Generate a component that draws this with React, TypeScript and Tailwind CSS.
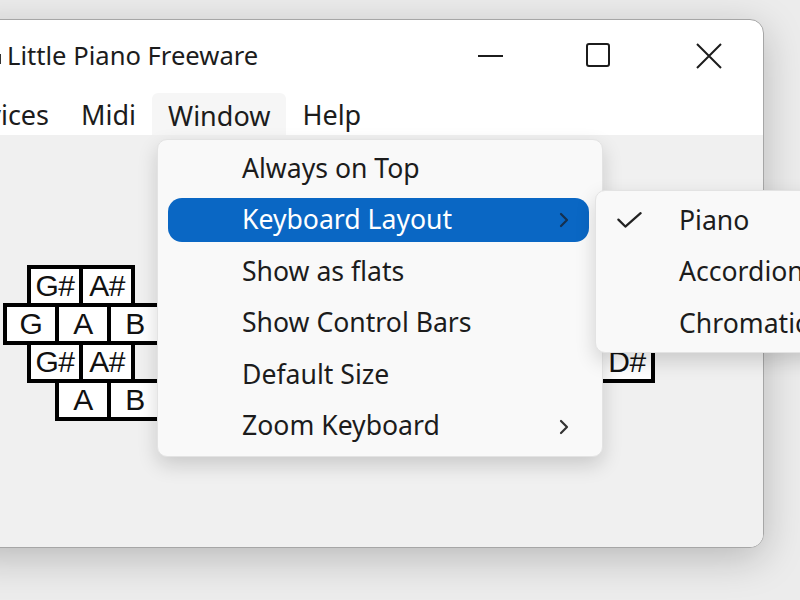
import React from "react";

const FONT = { fontFamily: '"Noto Sans", "Open Sans", sans-serif' };
const KEYFONT = { fontFamily: '"Liberation Sans", Arial, sans-serif' };

type K = string | null;

function KeyRow({ keys, ml, first }: { keys: K[]; ml: number; first?: boolean }) {
  return (
    <div className={`flex ${first ? "" : "-mt-[4px]"}`} style={{ marginLeft: ml }}>
      {keys.map((k, i) =>
        k === null ? (
          <div key={i} className="w-[56px] h-[42px] shrink-0 -ml-[4px] first:ml-0" />
        ) : (
          <div
            key={i}
            className="w-[56px] h-[42px] shrink-0 -ml-[4px] first:ml-0 border-[4px] border-black bg-white flex items-center justify-center text-[30px] leading-none text-[#111] tracking-[-0.5px]"
            style={KEYFONT}
          >
            {k}
          </div>
        )
      )}
    </div>
  );
}

function Chevron({ color }: { color: string }) {
  return (
    <svg width="10" height="16" viewBox="0 0 10 16" fill="none">
      <path d="M2 2l6 6-6 6" stroke={color} strokeWidth="2.2" strokeLinecap="round" strokeLinejoin="round" />
    </svg>
  );
}

export default function App() {
  // keys hidden behind the menus carry no label
  const row1: K[] = ["G#", "A#", null, "", "", null, "", "", "", null, "", ""];
  const row2: K[] = ["G", "A", "B", "", "", "", "", "", "", "", "", "", ""];
  const row3: K[] = ["G#", "A#", null, "", "", null, "", "", "", null, "", "D#"];
  const row4: K[] = ["A", "B", "", "", "", "", "", "", "", ""];

  const mainItems = [
    { label: "Always on Top" },
    { label: "Keyboard Layout", sub: true, active: true },
    { label: "Show as flats" },
    { label: "Show Control Bars" },
    { label: "Default Size" },
    { label: "Zoom Keyboard", sub: true },
  ];

  return (
    <div className="relative w-[800px] h-[600px] overflow-hidden bg-[#ececec]" style={FONT}>
      {/* Window */}
      <div className="absolute left-[-40px] top-[19px] w-[804px] h-[529px] rounded-[14px] border border-[#a6a6a6] bg-white overflow-hidden flex flex-col shadow-[0_10px_40px_rgba(0,0,0,0.22)]">
        {/* Title bar */}
        <div className="h-[73px] flex items-center shrink-0">
          <div className="w-[46px] h-full flex items-center justify-end pr-[6px]">
            <div className="w-[4px] h-[10px] bg-[#333] mt-[4px]" />
          </div>
          <div className="text-[25.6px] text-[#1c1c1c] leading-none -mt-[1px]">Little Piano Freeware</div>
          <div className="flex-1" />
          <div className="flex h-full">
            <div className="w-[109px] flex items-center justify-center">
              <div className="w-[25px] h-[2px] bg-[#1c1c1c] -mt-[2px]" />
            </div>
            <div className="w-[109px] flex items-center justify-center pr-[4px]">
              <div className="w-[24px] h-[24px] border-[2px] border-[#1c1c1c] rounded-[3px] -mt-[3px]" />
            </div>
            <div className="w-[109px] flex items-center justify-center">
              <svg width="26" height="26" viewBox="0 0 26 26" className="-mt-[2px]">
                <path d="M1 1L25 25M25 1L1 25" stroke="#1c1c1c" strokeWidth="2" />
              </svg>
            </div>
          </div>
        </div>
        {/* Menu bar */}
        <div className="h-[42px] flex items-stretch shrink-0 text-[27px] text-[#1c1c1c] leading-none">
          <div className="w-[104px] flex items-center justify-end pr-[16px] overflow-hidden whitespace-nowrap">Devices</div>
          <div className="px-[16px] flex items-center">Midi</div>
          <div className="px-[16px] flex items-center bg-[#f6f6f6] rounded-t-[6px] h-[44px]">Window</div>
          <div className="px-[16px] flex items-center">Help</div>
        </div>
        {/* Client area */}
        <div className="flex-1 bg-[#f0f0f0] pt-[130px] pl-[42px]">
          <KeyRow keys={row1} ml={24} first />
          <KeyRow keys={row2} ml={0} />
          <KeyRow keys={row3} ml={24} />
          <KeyRow keys={row4} ml={52} />
        </div>
      </div>

      {/* Main dropdown menu */}
      <div className="absolute left-[157px] top-[139px] w-[446px] h-[318px] rounded-[10px] bg-[#f9f9f9] border border-[#e3e3e3] shadow-[0_8px_20px_rgba(0,0,0,0.16)] pt-[3px]">
        {mainItems.map((it, i) => (
          <div key={i} className="h-[51.6px] px-[10px] pr-[13px] flex items-center">
            <div
              className={`w-full h-[44px] rounded-[14px] flex items-center pl-[74px] pr-[20px] text-[26.6px] leading-none ${
                it.active ? "bg-[#0a67c4] text-white" : "text-[#1c1c1c]"
              }`}
            >
              <span className="flex-1 -mt-[2px]">{it.label}</span>
              {it.sub && <Chevron color={it.active ? "#15304f" : "#333"} />}
            </div>
          </div>
        ))}
      </div>

      {/* Submenu */}
      <div className="absolute left-[595px] top-[190px] w-[260px] h-[163px] rounded-[10px] bg-[#f9f9f9] border border-[#e3e3e3] shadow-[0_8px_20px_rgba(0,0,0,0.16)] pt-[4px]">
        {["Piano", "Accordion", "Chromatic"].map((l, i) => (
          <div key={i} className="h-[51.6px] px-[10px] flex items-center">
            <div className="w-[25px] ml-[11px] flex items-center">
              {i === 0 && (
                <svg width="27" height="20" viewBox="0 0 27 20" fill="none">
                  <path d="M1.5 8.5L9 16L25.5 1.5" stroke="#222" strokeWidth="2.4" strokeLinecap="round" strokeLinejoin="round" />
                </svg>
              )}
            </div>
            <span className="ml-[37px] text-[26.6px] leading-none text-[#1c1c1c] -mt-[2px] whitespace-nowrap">{l}</span>
          </div>
        ))}
      </div>
    </div>
  );
}
